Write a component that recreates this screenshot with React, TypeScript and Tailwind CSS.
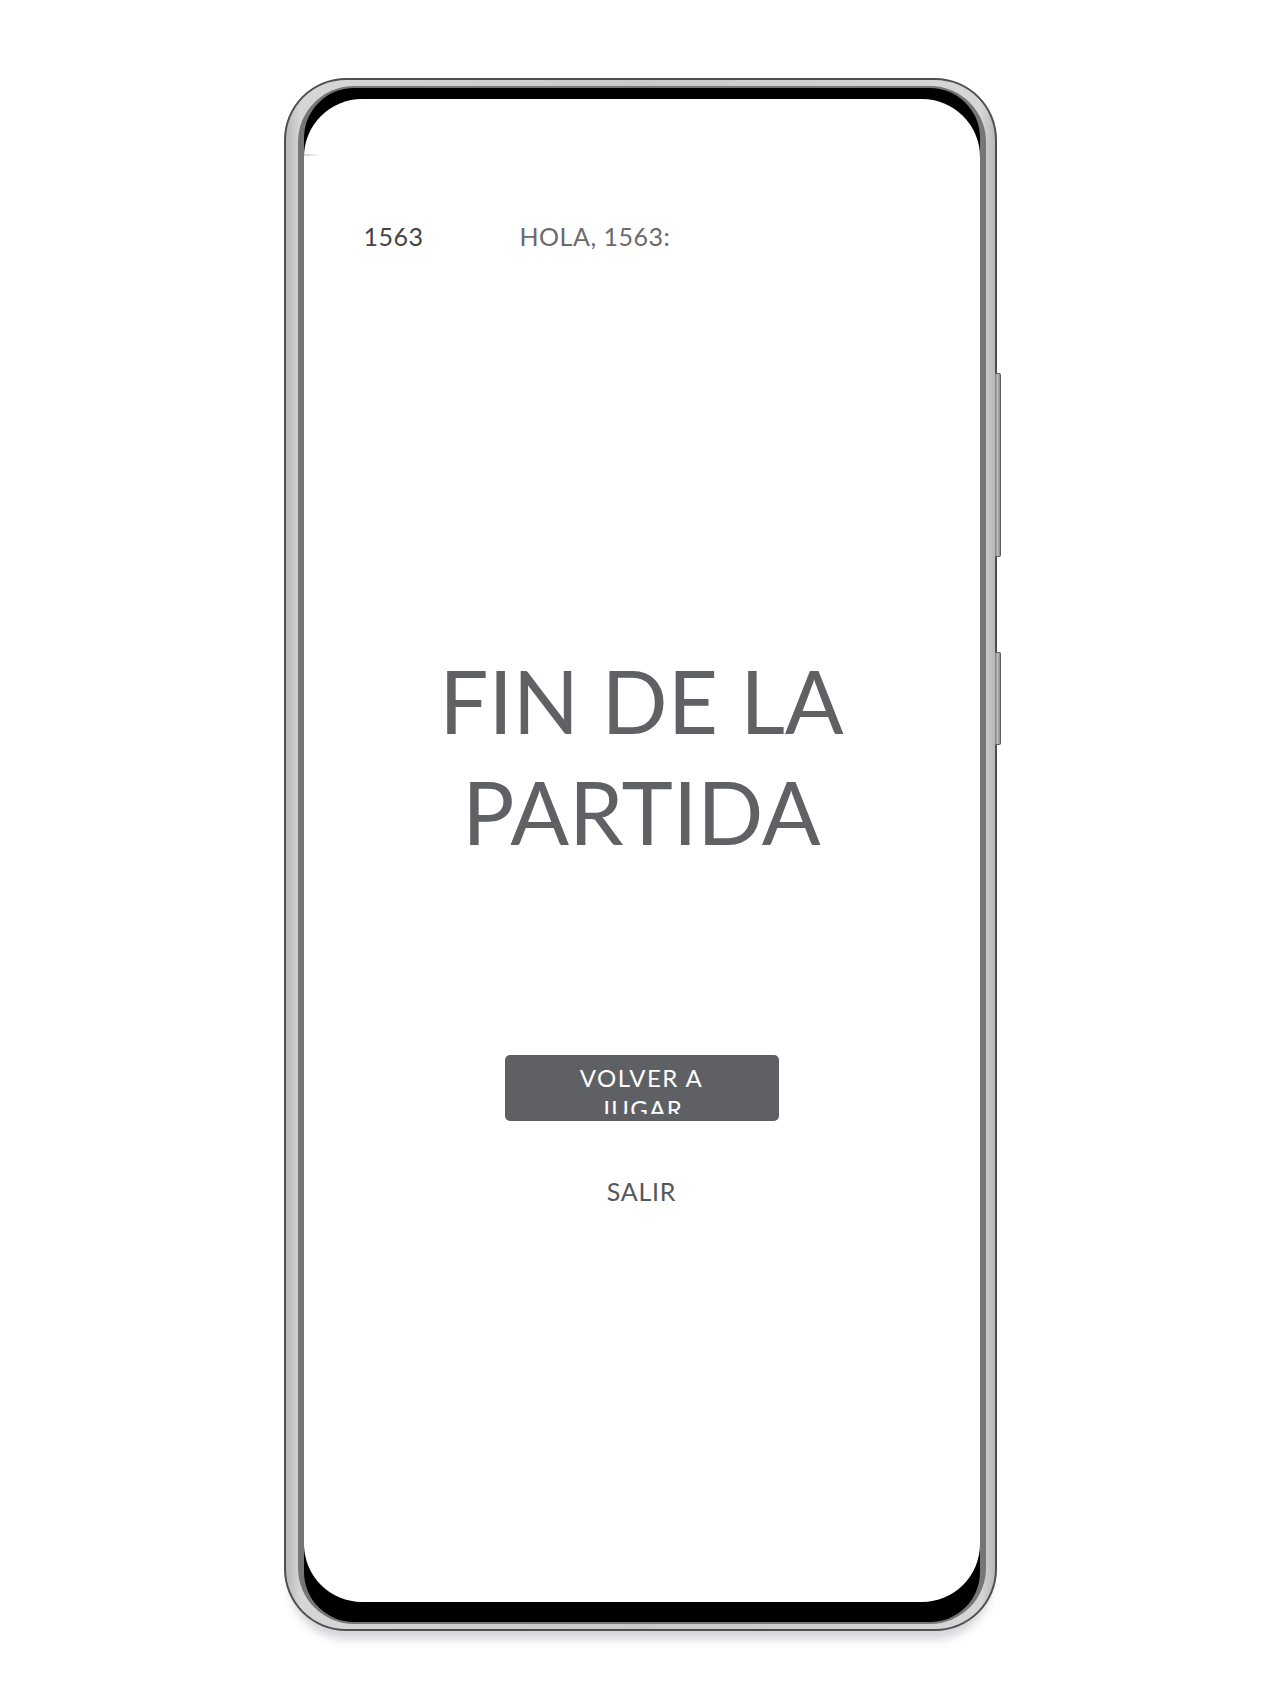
import React from 'react'

function SideButton({ top, height }: { top: string; height: string }) {
  return (
    <div
      className={`absolute left-[711px] w-[6px] rounded-r-[2px] border border-l-0 border-[#5e5e5e] bg-[linear-gradient(90deg,#7a7a7a,#bdbdbd,#8a8a8a)] ${top} ${height}`}
    />
  )
}

export default function App() {
  return (
    <div className="min-h-[1706px] w-full bg-white pt-[78px]" style={{ fontFamily: 'Lato, "Open Sans", sans-serif' }}>
      <div className="relative mx-auto w-[713px]">
        <SideButton top="top-[295px]" height="h-[184px]" />
        <SideButton top="top-[574px]" height="h-[93px]" />

        {/* frame */}
        <div className="rounded-[62px] bg-[#4f4f4f] p-[2px] shadow-[0_14px_10px_-6px_rgba(60,60,80,0.22)]">
          <div className="rounded-[60px] bg-[linear-gradient(90deg,#b8b8b8,#d6d6d6_2%,#c9c9c9_50%,#d6d6d6_98%,#b8b8b8)] pb-[5px] pl-[12px] pr-[9px] pt-[6px]">
            <div className="rounded-[56px] bg-[#767676] px-[6px] py-[2px]">
              <div className="rounded-[50px] bg-black pb-[20px] pt-[11px]">
                {/* screen */}
                <div className="relative flex h-[1503px] flex-col items-stretch overflow-hidden rounded-[58px] bg-white">
                  <div className="absolute left-0 top-[55px] h-[2px] w-[16px] bg-[linear-gradient(90deg,#cfcfcf,transparent)]" />

                  <div className="flex pl-[60px] pt-[125px] text-[25px] leading-none tracking-[0.02em]">
                    <span className="text-[#444]">1563</span>
                    <span className="ml-[96px] text-[#6b6b6b]">HOLA, 1563:</span>
                  </div>

                  <h1 className="mt-[396px] text-center text-[87px] font-normal leading-[111px] text-[#5f6165]">
                    FIN DE LA
                    <br />
                    PARTIDA
                  </h1>

                  <button className="mx-auto mt-[188px] flex h-[66px] w-[274px] justify-center rounded-[5px] bg-[#5e6064] pt-[7px] text-white">
                    <span className="block h-[52px] w-[180px] overflow-hidden text-center text-[24px] leading-[31px] tracking-[0.06em]">
                      VOLVER A JUGAR
                    </span>
                  </button>

                  <div className="mt-[58px] text-center text-[25px] leading-none tracking-[0.03em] text-[#55575b]">SALIR</div>
                </div>
              </div>
            </div>
          </div>
        </div>
      </div>
    </div>
  )
}
